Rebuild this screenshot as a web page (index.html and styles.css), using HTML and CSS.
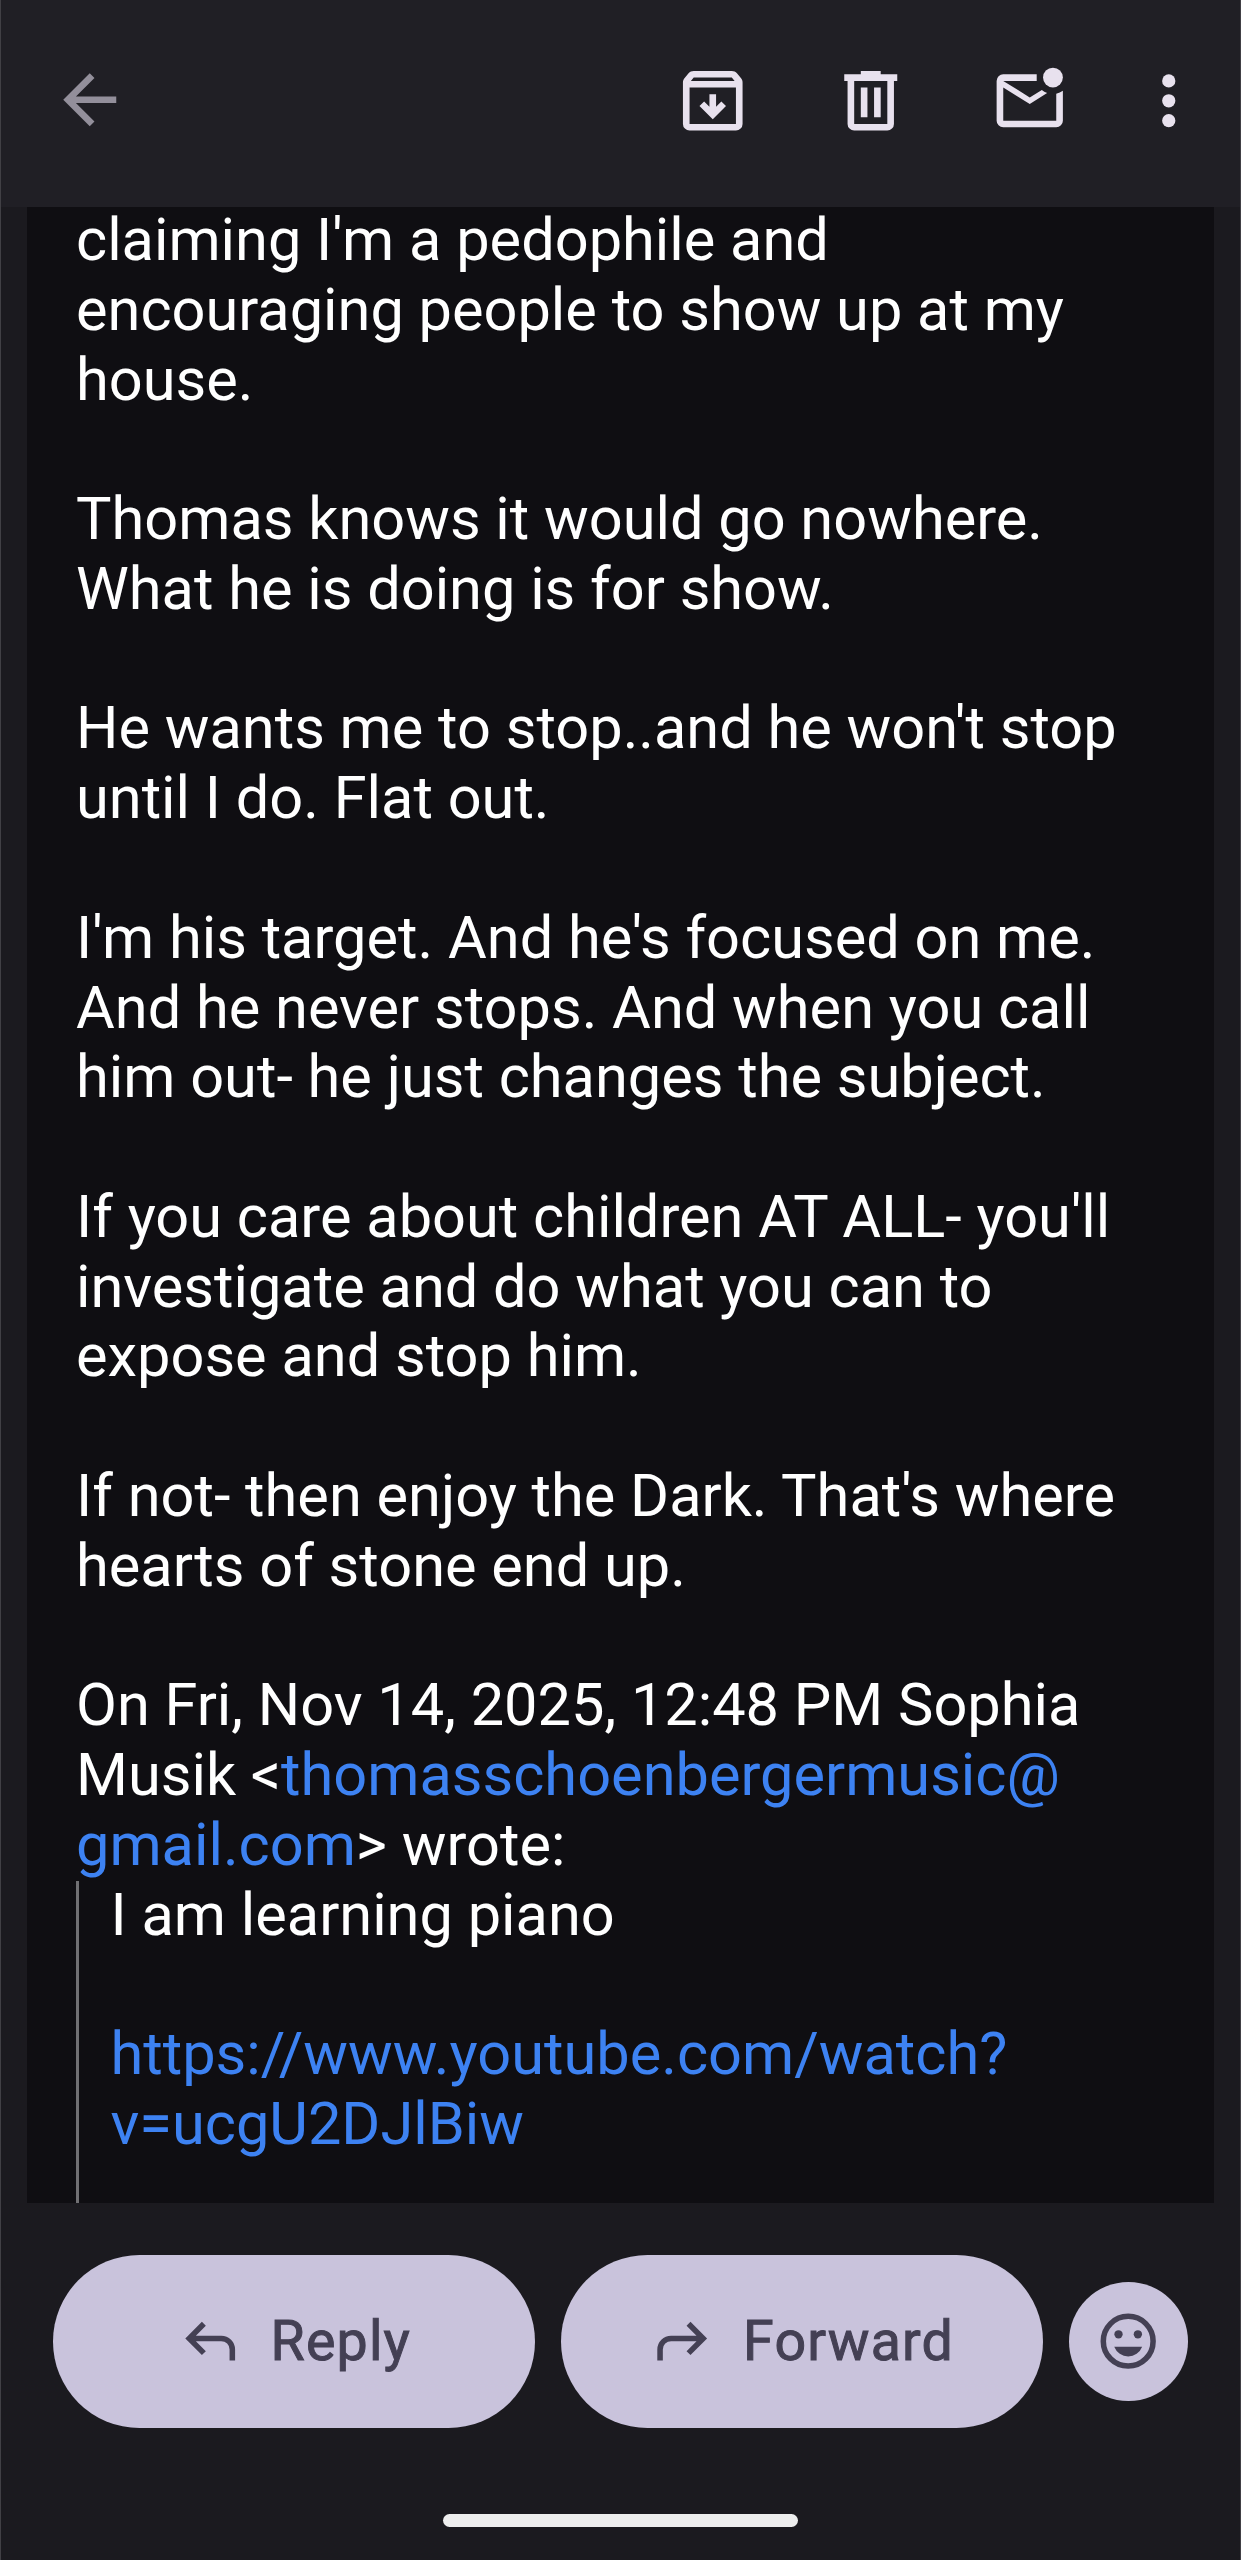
FILE: index.html
```html
<!DOCTYPE html>
<html lang="en">
<head>
<meta charset="utf-8">
<title>Mail</title>
<link rel="stylesheet" href="styles.css">
</head>
<body>
<div class="screen">
  <header class="toolbar">
    <svg class="icon icon-back" viewBox="0 0 24 24"><path d="M7.825 13l5.6 5.6L12 20l-8-8 8-8 1.425 1.4-5.6 5.6H20v2z"/></svg>
    <div class="actions">
      <svg class="icon" viewBox="0 0 24 24"><path fill-rule="evenodd" d="M12 17.6l4-4-1.4-1.4-1.6 1.6V10h-2v3.8l-1.6-1.6L8 13.6zM5 8v11h14V8zm0 13q-.825 0-1.4-.59Q3 19.82 3 19V6.500q0-.35.11-.675.12-.325.34-.6l1.250-1.525q.28-.34.69-.52Q5.800 3 6.250 3h11.500q.45 0 .86.180.41.180.69.520l1.250 1.525q.23.275.340.6.11.325.11.675V19q0 .82-.59 1.410Q19.820 21 19 21zM5.400 6h13.200l-.85-1H6.250z"/></svg>
      <svg class="icon" viewBox="0 0 24 24"><path fill-rule="evenodd" d="M7 21q-.825 0-1.410-.59Q5 19.820 5 19V6H4V4h5V3h6v1h5v2h-1v13q0 .82-.59 1.410Q17.820 21 17 21zM17 6H7v13h10zM9 17h2V8H9zm4 0h2V8h-2z"/></svg>
      <svg class="icon" viewBox="0 0 24 24"><circle cx="19" cy="5" r="3"/><path d="M4 20q-.825 0-1.410-.59Q2 18.820 2 18V6q0-.82.590-1.410Q3.180 4 4 4h10.100v2H4l8 5 3.650-2.280q.7.580 1.600.930L12 13 4 8v10h16V9.900q1.120-.23 2-.9v9q0 .82-.59 1.410Q20.820 20 20 20z"/></svg>
      <svg class="icon" viewBox="0 0 24 24"><circle cx="12" cy="6" r="2"/><circle cx="12" cy="12" r="2"/><circle cx="12" cy="18" r="2"/></svg>
    </div>
  </header>
  <main class="message">
    <p>claiming I'm a pedophile and<br>encouraging people to show up at my<br>house.</p>
    <p>Thomas knows it would go nowhere.<br>What he is doing is for show.</p>
    <p>He wants me to stop..and he won't stop<br>until I do. Flat out.</p>
    <p>I'm his target. And he's focused on me.<br>And he never stops. And when you call<br>him out- he just changes the subject.</p>
    <p>If you care about children AT ALL- you'll<br>investigate and do what you can to<br>expose and stop him.</p>
    <p>If not- then enjoy the Dark. That's where<br>hearts of stone end up.</p>
    <div class="attribution">On Fri, Nov 14, 2025, 12:48 PM Sophia<br>Musik &lt;<a class="link">thomasschoenbergermusic@<br>gmail.com</a>&gt; wrote:</div>
    <blockquote class="quote">
      <p>I am learning piano</p>
      <a class="link">https://www.youtube.com/watch?<br>v=ucgU2DJlBiw</a>
    </blockquote>
  </main>
  <footer class="reply-bar">
    <div class="pill">
      <svg class="pill-icon" viewBox="0 0 24 24"><path d="M19 19v-4q0-1.250-.875-2.125T16 12H6.825l3.600 3.600L9 17l-6-6 6-6 1.425 1.400-3.600 3.600H16q2.075 0 3.540 1.460Q21 12.930 21 15v4z"/></svg>
      <span class="label">Reply</span>
    </div>
    <div class="pill">
      <svg class="pill-icon" viewBox="0 0 24 24"><path d="M5 19v-4q0-1.250.875-2.125T8 12h9.175l-3.600 3.600L15 17l6-6-6-6-1.425 1.400 3.600 3.600H8q-2.075 0-3.540 1.460Q3 12.930 3 15v4z"/></svg>
      <span class="label">Forward</span>
    </div>
    <div class="emoji">
      <svg class="pill-icon" viewBox="0 0 24 24"><circle class="ring" cx="12" cy="12" r="9"/><circle cx="8.500" cy="9.500" r="1.500"/><circle cx="15.500" cy="9.500" r="1.500"/><path d="M12 17.500q1.680 0 3.050-.95Q16.430 15.600 17.050 14H6.950q.63 1.600 2 2.550 1.380.95 3.050.95z"/></svg>
    </div>
  </footer>
  <div class="home"></div>
</div>
</body>
</html>
```
FILE: styles.css
```css
* { box-sizing: border-box; }
body { margin: 0; background: #1b1a1f; }
.screen {
  display: flex;
  flex-direction: column;
  width: 1241px;
  height: 2560px;
  border: solid #414045;
  border-width: 0 1px;
  background: #1b1a1f;
  font-family: Roboto, "Liberation Sans", sans-serif;
  overflow: hidden;
}
.toolbar {
  flex: none;
  display: flex;
  justify-content: space-between;
  height: 207px;
  padding: 61.300px 31.700px 0 49px;
  background: #201f25;
}
.icon { display: block; width: 79.500px; height: 79.500px; fill: #e8e1ee; }
.icon-back { margin-top: -1px; fill: #938f9b; }
.actions { display: flex; gap: 79px; }
.actions .icon:last-child { margin-left: -19.200px; }
.message {
  flex: none;
  height: 1996px;
  margin: 0 26px;
  padding-left: 49px;
  background: #0f0e12;
  color: #fff;
  font-size: 59.500px;
  line-height: 69.780px;
  white-space: nowrap;
  overflow: hidden;
}
.message p { margin: 0 0 69.780px; }
.message > p:first-child { margin-top: -1px; }
.link { color: #3d82f2; }
.quote {
  margin: 0;
  height: 400px;
  padding-left: 31.500px;
  border-left: 3px solid #707073;
}
.reply-bar {
  flex: none;
  display: flex;
  align-items: center;
  gap: 26px;
  height: 173px;
  margin: 52px 52px 0;
}
.pill {
  display: flex;
  align-items: center;
  justify-content: center;
  gap: 27.500px;
  width: 482.500px;
  height: 173px;
  border-radius: 87px;
  background: #c9c3dc;
}
.pill-icon { display: block; width: 66.400px; height: 66.400px; fill: #444054; }
.ring { fill: none; stroke: #444054; stroke-width: 2; }
.label {
  color: #444054;
  font-size: 55.500px;
  line-height: 66px;
  font-weight: 400;
  letter-spacing: 1.200px;
  -webkit-text-stroke: 1px #444054;
}
.emoji {
  flex: none;
  display: grid;
  place-items: center;
  width: 119.500px;
  height: 119.500px;
  border-radius: 50%;
  background: #c9c3dc;
}
.home {
  flex: none;
  width: 355px;
  height: 13px;
  margin: 86px auto 0;
  border-radius: 7px;
  background: #eee;
}
```
